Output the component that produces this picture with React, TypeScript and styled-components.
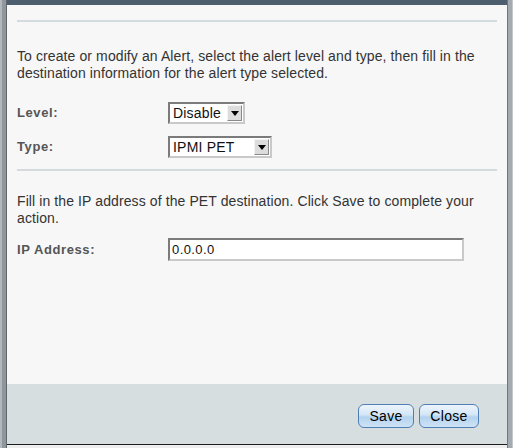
import styled, { createGlobalStyle } from 'styled-components'

const GlobalStyle = createGlobalStyle`
  html, body {
    margin: 0;
    padding: 0;
    background: #ffffff;
  }
  body {
    font-family: "Liberation Sans", Arial, sans-serif;
  }
`

const Frame = styled.div`
  display: grid;
  grid-template-columns: 7px 1fr 6px;
  width: 513px;
  height: 448px;
  overflow: hidden;
`

const SideBorder = styled.div<{ $side: 'left' | 'right' }>`
  background: ${p => p.$side === 'left'
    ? 'linear-gradient(to right, #b3b8bc 0, #b3b8bc 2px, #8f979d 2px, #8f979d 6px, #5e656b 6px)'
    : 'linear-gradient(to right, #6f777d 0, #6f777d 1px, #a4abb0 1px, #a4abb0 5px, #c3c7ca 5px)'};
`

const Window = styled.div`
  display: flex;
  flex-direction: column;
  min-width: 0;
`

const TitleEdge = styled.div`
  height: 5px;
  background: #4d5e6e;
`

const Body = styled.div`
  flex: 1;
  background: #f7f7f7;
  padding: 15px 10px 0 10px;
  color: #333333;
  font-size: 14px;
`

const Rule = styled.div`
  height: 2px;
  background: #d4dbde;
`

const Paragraph = styled.p<{ $top: number }>`
  margin: ${p => p.$top}px 0 0 0;
  line-height: 17px;
  letter-spacing: 0.1px;
`

const FormRow = styled.div<{ $top: number }>`
  display: grid;
  grid-template-columns: 151px 1fr;
  align-items: center;
  margin-top: ${p => p.$top}px;
  height: 23px;
`

const Label = styled.span`
  font-weight: bold;
  color: #555555;
  font-size: 13px;
  letter-spacing: 0.6px;
`

const SelectBox = styled.div<{ $w: number }>`
  display: flex;
  align-items: center;
  justify-content: space-between;
  box-sizing: border-box;
  width: ${p => p.$w}px;
  height: 22px;
  background: #ffffff;
  border-style: solid;
  border-width: 2px;
  border-color: #7b7b7b #c9c9c9 #c9c9c9 #7b7b7b;
  padding: 0 1px 0 3px;
  color: #111111;
  font-size: 14px;
  letter-spacing: 0.2px;
`

const ArrowButton = styled.span`
  display: flex;
  align-items: center;
  justify-content: center;
  box-sizing: border-box;
  width: 15px;
  height: 16px;
  background: #dcdcdc;
  border-style: solid;
  border-width: 1px;
  border-color: #f4f4f4 #8a8a8a #8a8a8a #f4f4f4;
  &::after {
    content: '';
    border-left: 4px solid transparent;
    border-right: 4px solid transparent;
    border-top: 5px solid #000000;
    margin-top: 1px;
  }
`

const TextInput = styled.input`
  box-sizing: border-box;
  width: 296px;
  height: 23px;
  border-style: solid;
  border-width: 2px;
  border-color: #7b7b7b #c9c9c9 #c9c9c9 #7b7b7b;
  background: #ffffff;
  padding: 0 2px;
  font-family: "Liberation Sans", Arial, sans-serif;
  font-size: 13px;
  letter-spacing: 0.4px;
  color: #111111;
  outline: none;
`

const Spacer = styled.div<{ $h: number }>`
  height: ${p => p.$h}px;
`

const Footer = styled.div`
  display: flex;
  justify-content: flex-end;
  align-items: flex-start;
  gap: 5px;
  height: 60px;
  box-sizing: border-box;
  padding: 20px 28px 0 0;
  background: #d7dee0;
`

const Button = styled.button<{ $w: number }>`
  width: ${p => p.$w}px;
  height: 24px;
  border: 1px solid #4f7fb5;
  border-radius: 6px;
  background: linear-gradient(to bottom, #eef5fb 0%, #d3e6f6 45%, #b3d2ee 55%, #cfe4f6 100%);
  font-family: "Liberation Sans", Arial, sans-serif;
  font-size: 14px;
  letter-spacing: 0.3px;
  color: #000000;
  padding: 0;
  cursor: pointer;
`

const BottomEdge = styled.div`
  height: 3px;
  border-top: 1px solid #1e1e1e;
  background: #eeeeee;
`

export default function App() {
  return (
    <>
      <GlobalStyle />
      <Frame>
        <SideBorder $side="left" />
        <Window>
          <TitleEdge />
          <Body>
            <Rule />
            <Paragraph $top={26}>
              To create or modify an Alert, select the alert level and type, then fill in the destination information for the alert type selected.
            </Paragraph>
            <FormRow $top={19}>
              <Label>Level:</Label>
              <SelectBox $w={77}>
                Disable
                <ArrowButton />
              </SelectBox>
            </FormRow>
            <FormRow $top={11}>
              <Label>Type:</Label>
              <SelectBox $w={104}>
                IPMI PET
                <ArrowButton />
              </SelectBox>
            </FormRow>
            <Spacer $h={11} />
            <Rule />
            <Paragraph $top={22}>
              Fill in the IP address of the PET destination. Click Save to complete your action.
            </Paragraph>
            <FormRow $top={11}>
              <Label>IP Address:</Label>
              <TextInput defaultValue="0.0.0.0" />
            </FormRow>
          </Body>
          <Footer>
            <Button $w={56}>Save</Button>
            <Button $w={60}>Close</Button>
          </Footer>
          <BottomEdge />
        </Window>
        <SideBorder $side="right" />
      </Frame>
    </>
  )
}
